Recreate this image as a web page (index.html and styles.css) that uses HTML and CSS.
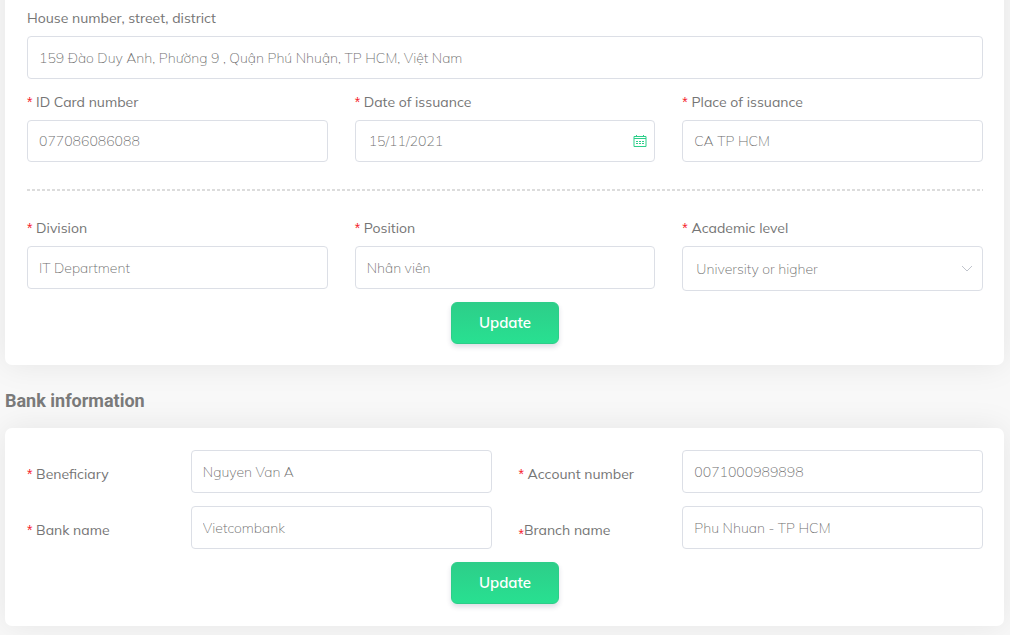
FILE: index.html
```html
<!DOCTYPE html>
<html lang="en">
<head>
<meta charset="utf-8">
<title>Bank information</title>
<link rel="stylesheet" href="styles.css">
</head>
<body>
<main class="page">
  <form class="card card-profile">
    <div class="field">
      <label class="label" for="address">House number, street, district</label>
      <input class="input" id="address" type="text" value="159 Đào Duy Anh, Phường 9 , Quận Phú Nhuận, TP HCM, Việt Nam">
    </div>
    <div class="row">
      <div class="field">
        <label class="label" for="idcard"><span class="req">*</span> ID Card number</label>
        <input class="input input-short" id="idcard" type="text" value="077086086088">
      </div>
      <div class="field">
        <label class="label" for="issued"><span class="req">*</span> Date of issuance</label>
        <div class="control">
          <input class="input input-short input-inset" id="issued" type="text" value="15/11/2021">
          <svg class="icon-calendar" viewBox="0 0 14 14" aria-hidden="true">
            <path d="M1 2.5h12v10H1zM1 4.5h12M3.5 1v2M10.5 1v2" />
            <path class="dots" d="M3 7.5h8M3 9.5h8" />
          </svg>
        </div>
      </div>
      <div class="field">
        <label class="label" for="place"><span class="req">*</span> Place of issuance</label>
        <input class="input input-short" id="place" type="text" value="CA TP HCM">
      </div>
    </div>
    <hr class="divider">
    <div class="row">
      <div class="field">
        <label class="label" for="division"><span class="req">*</span> Division</label>
        <input class="input" id="division" type="text" value="IT Department">
      </div>
      <div class="field">
        <label class="label" for="position"><span class="req">*</span> Position</label>
        <input class="input" id="position" type="text" value="Nhân viên">
      </div>
      <div class="field">
        <label class="label" for="level"><span class="req">*</span> Academic level</label>
        <div class="control">
          <select class="input select input-inset" id="level"><option>University or higher</option></select>
          <svg class="icon-chevron" viewBox="0 0 12 8" aria-hidden="true"><path d="M1 1l5 5 5-5" /></svg>
        </div>
      </div>
    </div>
    <div class="actions actions-profile"><button class="button" type="button">Update</button></div>
  </form>

  <h2 class="heading">Bank information</h2>

  <form class="card card-bank">
    <div class="bank">
      <label class="label" for="beneficiary"><span class="req">*</span> Beneficiary</label>
      <input class="input" id="beneficiary" type="text" value="Nguyen Van A">
      <label class="label" for="account"><span class="req">*</span> Account number</label>
      <input class="input" id="account" type="text" value="0071000989898">
      <label class="label" for="bank"><span class="req">*</span> Bank name</label>
      <input class="input" id="bank" type="text" value="Vietcombank">
      <label class="label label-tight" for="branch"><span class="req">*</span>Branch name</label>
      <input class="input" id="branch" type="text" value="Phu Nhuan - TP HCM">
    </div>
    <div class="actions"><button class="button" type="button">Update</button></div>
  </form>
</main>
</body>
</html>
```
FILE: styles.css
```css
* { box-sizing: border-box; }

body {
  margin: 0;
  background: #f8f8f8;
  color: #757575;
  font-family: Mulish, Muli, Lato, "Noto Sans", sans-serif;
  font-size: 14px;
}

.page {
  padding: 0 6px 9px 5px;
  overflow: hidden;
}

.card {
  background: #fff;
  border-radius: 7px;
  box-shadow: 0 0 32px rgba(0, 0, 0, 0.08);
}

/* The first card continues above the top edge of the view. */
.card-profile {
  margin-top: -32px;
  padding: 40px 21px 21px 22px;
}

.card-bank { padding: 22px 21px 22px 22px; }

.row {
  display: grid;
  grid-template-columns: repeat(3, 1fr);
  align-items: start;
  gap: 27px;
}

.field + .row { margin-top: 13px; }

.label {
  display: block;
  line-height: 21px;
  font-weight: 400;
}

.field .label { margin-bottom: 7px; }

.req {
  color: #f5222d;
  font-family: "Liberation Sans", Arial, sans-serif;
}

.control { position: relative; }

.input {
  display: block;
  width: 100%;
  min-width: 0;
  height: 43px;
  padding: 1px 11px;
  border: 1px solid #dcdfe6;
  border-radius: 4px;
  outline: 0;
  background: #fff;
  color: #6e6e6e;
  font: inherit;
  font-weight: 200;
}

.input-short { height: 42px; }

.input-inset { padding-left: 13px; }

.select {
  height: 45px;
  appearance: none;
}

.icon-calendar {
  position: absolute;
  top: 14px;
  right: 8px;
  width: 14px;
  height: 14px;
  fill: none;
  stroke: #2dce89;
  stroke-width: 1;
}

.icon-calendar .dots { stroke-dasharray: 2 1; }

.icon-chevron {
  position: absolute;
  top: 19px;
  right: 10px;
  width: 12px;
  height: 8px;
  fill: none;
  stroke: #c0c4cc;
}

.divider {
  height: 2px;
  margin: 27px 0;
  border: 0;
  background: repeating-linear-gradient(90deg, #dcdcdc 0 3px, transparent 3px 5px);
}

.actions {
  display: flex;
  justify-content: center;
  margin-top: 13px;
}

.actions-profile { margin-top: 11px; }

.button {
  width: 108px;
  height: 42px;
  padding: 0 0 2px;
  border: 1px solid #2dce89;
  border-radius: 6px;
  background: linear-gradient(#2dce89, #28e091);
  box-shadow: 0 3px 5px rgba(50, 50, 93, 0.16);
  color: #fff;
  font: inherit;
  font-size: 15px;
  font-weight: 600;
}

.heading {
  margin: 24px 0 15px;
  color: #7a7a7a;
  font: 700 18px/24px Roboto, sans-serif;
}

.bank {
  display: grid;
  grid-template-columns: repeat(6, 1fr);
  align-items: center;
  gap: 13px 27px;
}

.bank .label { padding-top: 6px; }

.bank .input { grid-column: span 2; }

.label-tight .req { vertical-align: sub; line-height: 1; }
```
